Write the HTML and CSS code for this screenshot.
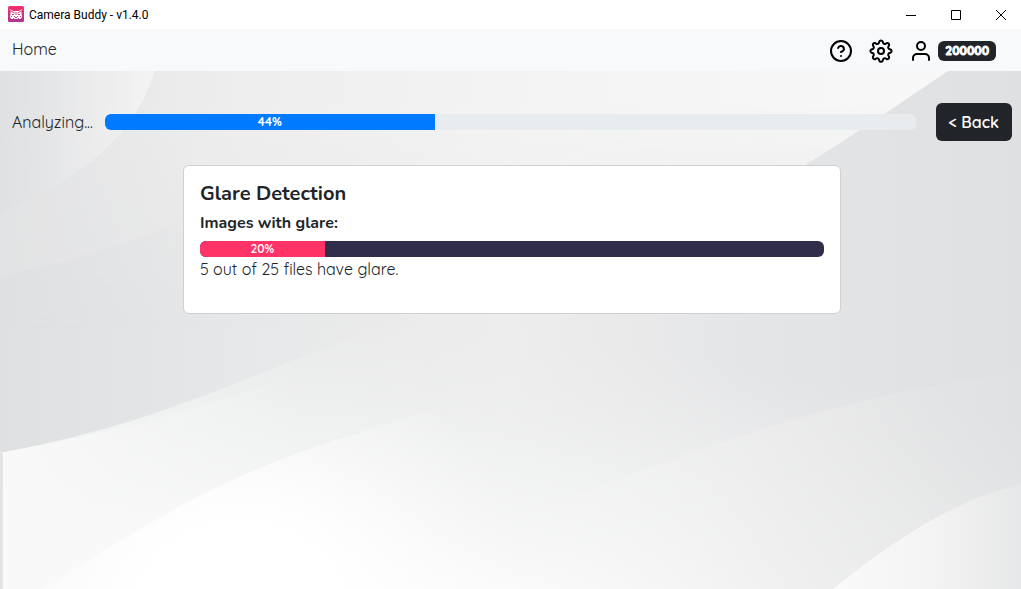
FILE: index.html
```html
<!DOCTYPE html>
<html lang="en">
<head>
<meta charset="utf-8">
<title>Camera Buddy - v1.4.0</title>
<link rel="stylesheet" href="styles.css">
</head>
<body>
<header class="titlebar">
  <svg class="app-icon" viewBox="0 0 16 16" aria-hidden="true">
    <defs><linearGradient id="logo" x1="0" y1="0" x2="0" y2="1"><stop offset="0" stop-color="#fb2c68"/><stop offset="1" stop-color="#a93792"/></linearGradient></defs>
    <rect width="16" height="16" rx="1.5" fill="url(#logo)"/>
    <path d="M1.500 3l4 2h5l4-2-1 2.500V8l.7 3-1.700 2H3.500l-1.700-2 .7-3V5.500z" fill="#fff"/>
    <path d="M2 4.500L6.500 7M14 4.500L9.500 7" stroke="#e0307a" fill="none"/>
    <path d="M4 8h2v1H4zM10 8h2v1h-2zM7.500 6h1v3h-1zM3 10h1v1H3zM12 10h1v1h-1zM6 10h1v1H6zM9 10h1v1H9zM7 11h2v1H7zM5 12h1v1H5zM10 12h1v1h-1z" fill="#c43585"/>
  </svg>
  <span class="app-name">Camera Buddy - v1.4.0</span>
  <div class="window-controls">
    <button type="button" aria-label="Minimize"><svg viewBox="0 0 12 12"><path d="M1 6.500h10"/></svg></button>
    <button type="button" aria-label="Maximize"><svg viewBox="0 0 12 12"><path d="M1.500 1.500h9v9h-9z"/></svg></button>
    <button type="button" aria-label="Close"><svg viewBox="0 0 12 12"><path d="M1 1l10 10M11 1L1 11"/></svg></button>
  </div>
</header>
<nav class="navbar">
  <a class="home" href="#">Home</a>
  <div class="actions">
    <button type="button" aria-label="Help"><svg viewBox="0 0 24 24"><circle cx="12" cy="12" r="10"/><path d="M9.090 9a3 3 0 0 1 5.830 1c0 2-3 3-3 3M12 17h.01"/></svg></button>
    <button type="button" aria-label="Settings"><svg viewBox="0 0 24 24"><circle cx="12" cy="12" r="3"/><path d="M10.300 2.600a1.800 1.800 0 0 1 3.400 0l.3 1.100a1.800 1.800 0 0 0 2.600 1.100l1-.6a1.800 1.800 0 0 1 2.400 2.400l-.6 1a1.800 1.800 0 0 0 1.100 2.600l1.100.3a1.800 1.800 0 0 1 0 3.200l-1.100.3a1.800 1.800 0 0 0-1.100 2.600l.6 1a1.800 1.800 0 0 1-2.400 2.400l-1-.6a1.800 1.800 0 0 0-2.600 1.100l-.3 1.100a1.800 1.800 0 0 1-3.400 0l-.3-1.100a1.800 1.800 0 0 0-2.600-1.100l-1 .6a1.800 1.800 0 0 1-2.400-2.400l.6-1a1.800 1.800 0 0 0-1.100-2.600l-1.100-.3a1.800 1.800 0 0 1 0-3.200l1.100-.3a1.800 1.800 0 0 0 1.100-2.600l-.6-1a1.800 1.800 0 0 1 2.400-2.400l1 .6A1.800 1.800 0 0 0 10 3.700z"/></svg></button>
    <button type="button" class="account"><svg viewBox="0 0 24 24" aria-hidden="true"><circle cx="12" cy="7" r="4"/><path d="M20 21v-2a4 4 0 0 0-4-4H8a4 4 0 0 0-4 4v2"/></svg><span class="badge">200000</span></button>
  </div>
</nav>
<main class="content">
  <svg class="backdrop" viewBox="0 0 1021 518" preserveAspectRatio="none" aria-hidden="true">
    <defs>
      <linearGradient id="base" x1="0" y1="0" x2="1" y2="0"><stop offset="0" stop-color="#dfe0e2"/><stop offset=".25" stop-color="#e7e8e9"/><stop offset=".5" stop-color="#ededed"/><stop offset=".75" stop-color="#e4e5e7"/><stop offset="1" stop-color="#dfe0e2"/></linearGradient>
      <linearGradient id="sweep" x1="0" y1="0" x2="1" y2="0"><stop offset="0" stop-color="#dfe0e2"/><stop offset=".25" stop-color="#eeeeee"/><stop offset=".6" stop-color="#f3f4f3"/><stop offset="1" stop-color="#f8f8f8"/></linearGradient>
      <linearGradient id="fade" x1="0" y1="0" x2="0" y2="1"><stop offset=".1" stop-color="#fff"/><stop offset=".9" stop-color="#000"/></linearGradient>
      <mask id="down"><rect width="1021" height="290" fill="url(#fade)"/></mask>
      <linearGradient id="corner" x1="0" y1="0" x2="1" y2="0"><stop offset="0" stop-color="#dfe0e2"/><stop offset="1" stop-color="#f7f7f7"/></linearGradient>
      <linearGradient id="low" gradientUnits="userSpaceOnUse" x1="440" y1="240" x2="390" y2="518"><stop offset="0" stop-color="#ededed" stop-opacity="0"/><stop offset=".45" stop-color="#f1f2f2" stop-opacity=".8"/><stop offset="1" stop-color="#fcfcfc"/></linearGradient>
      <linearGradient id="left" x1="0" y1="0" x2="1" y2="0"><stop offset="0" stop-color="#f9f9f9"/><stop offset="1" stop-color="#f3f4f4" stop-opacity="0"/></linearGradient>
      <radialGradient id="glow" gradientUnits="userSpaceOnUse" cx="240" cy="560" r="300"><stop offset="0" stop-color="#fff"/><stop offset=".35" stop-color="#fff"/><stop offset="1" stop-color="#fafafa" stop-opacity="0"/></radialGradient>
      <linearGradient id="band" x1="0" y1="0" x2="1" y2="0"><stop offset="0" stop-color="#f8f8f8" stop-opacity="0"/><stop offset=".45" stop-color="#efefef"/><stop offset="1" stop-color="#e0e1e2"/></linearGradient>
      <linearGradient id="hill" x1="0" y1="0" x2="1" y2="0"><stop offset="0" stop-color="#fafafa"/><stop offset=".5" stop-color="#f4f4f4"/><stop offset="1" stop-color="#e6e7e8"/></linearGradient>
    </defs>
    <rect width="1021" height="518" fill="url(#base)"/>
    <path d="M0 0H948C850 66 760 130 620 190C480 250 220 280 0 290z" fill="url(#sweep)" mask="url(#down)"/>
    <path d="M0 0H155C140 45 105 100 0 142z" fill="url(#corner)" opacity=".75"/>
    <path d="M155 0H310C295 45 270 75 240 105L180 150C120 180 60 190 0 207V142C105 100 140 45 155 0z" fill="#f1f1f1" opacity=".2"/>
    <path d="M0 382C200 345 270 285 480 225H1021V518H0z" fill="url(#low)"/>
    <path d="M0 382C110 362 200 340 300 300V518H0z" fill="url(#left)"/>
    <path d="M43 518C150 450 230 400 350 365L700 250V518z" fill="url(#glow)"/>
    <path d="M520 445C690 380 850 320 1021 302V518H520z" fill="url(#band)" opacity=".65"/>
    <path d="M833 518C900 464 960 427 1021 413V518z" fill="url(#hill)"/>
    <path d="M0 382H3V518H0z" fill="#e3e4e6"/>
  </svg>
  <section class="analysis">
    <span id="analysis-label">Analyzing...</span>
    <div class="progress" role="progressbar" aria-labelledby="analysis-label" aria-valuenow="44" aria-valuemin="0" aria-valuemax="100"><div class="bar strong" style="width:40.7%">44%</div></div>
    <button type="button" class="back">&lt; Back</button>
  </section>
  <article class="card">
    <h1>Glare Detection</h1>
    <h2 id="glare-label">Images with glare:</h2>
    <div class="progress dark" role="progressbar" aria-labelledby="glare-label" aria-valuenow="20" aria-valuemin="0" aria-valuemax="100"><div class="bar pink" style="width:20%">20%</div></div>
    <p>5 out of 25 files have glare.</p>
  </article>
</main>
</body>
</html>
```
FILE: styles.css
```css
* { box-sizing: border-box; }
body {
  margin: 0;
  min-height: 100vh;
  display: flex;
  flex-direction: column;
  font: 16px/24px Quicksand, Nunito, "Open Sans", sans-serif;
  color: #212529;
}
button { font: inherit; color: inherit; border: 0; padding: 0; background: none; }
svg { display: block; }
.titlebar {
  display: flex;
  align-items: center;
  height: 29px;
  padding-left: 8px;
  gap: 5px;
  background: #fff;
  color: #000;
}
.app-icon { width: 16px; height: 16px; margin-bottom: 2px; }
.app-name { font: 12px/16px Roboto, "Open Sans", sans-serif; }
.window-controls { display: flex; gap: 4px; margin-left: auto; }
.window-controls button { display: grid; place-items: center; width: 41px; height: 26px; }
.window-controls svg { width: 12px; height: 12px; fill: none; stroke: #000; stroke-width: 1; }
.navbar {
  display: flex;
  align-items: center;
  justify-content: space-between;
  height: 42px;
  padding: 0 25px 0 12px;
  background: #f8f9fa;
}
.home { padding-bottom: 2px; color: #212529; text-decoration: none; }
.actions { display: flex; align-items: center; gap: 16px; padding-top: 2px; }
.actions svg {
  width: 24px;
  height: 24px;
  fill: none;
  stroke: #000;
  stroke-width: 2;
  stroke-linecap: round;
  stroke-linejoin: round;
}
.account { display: flex; align-items: center; gap: 5px; }
.badge {
  padding: 4px 7px;
  border-radius: 6px;
  background: #212529;
  color: #fff;
  font-size: 12px;
  line-height: 12px;
  font-weight: 800;
  -webkit-text-stroke: 1px #fff;
  paint-order: stroke;
}
.content { position: relative; flex: 1; padding: 32px 9px 24px 12px; }
.backdrop { position: absolute; inset: 0; width: 100%; height: 100%; z-index: -1; }
.analysis { display: flex; align-items: center; margin-bottom: 24px; }
.analysis .progress { flex: 1; margin: 0 20px 0 12px; }
.progress {
  display: flex;
  height: 16px;
  overflow: hidden;
  border-radius: 6px;
  background: #e9ecef;
}
.bar {
  background: #007bff;
  color: #fff;
  font-size: 12px;
  font-weight: 600;
  line-height: 16px;
  text-align: center;
}
.strong { font-weight: 700; }
.back {
  padding: 7px 13px;
  border-radius: 6px;
  background: #212529;
  color: #fff;
  font-weight: 600;
}
.card {
  width: calc(66% - 2px);
  margin: 0 auto;
  padding: 16px 16px 32px;
  border: 1px solid #d0d1d2;
  border-radius: 6px;
  background: #fff;
}
.card h1 { margin: 0 0 6px; font: 700 20px/24px Nunito, "Open Sans", sans-serif; }
.card h2 { margin: 0 0 7px; font: 700 16px/22px Nunito, "Open Sans", sans-serif; }
.card p { margin: 0; }
.dark { background: #302e4b; }
.pink { background: #ff3366; }
```
